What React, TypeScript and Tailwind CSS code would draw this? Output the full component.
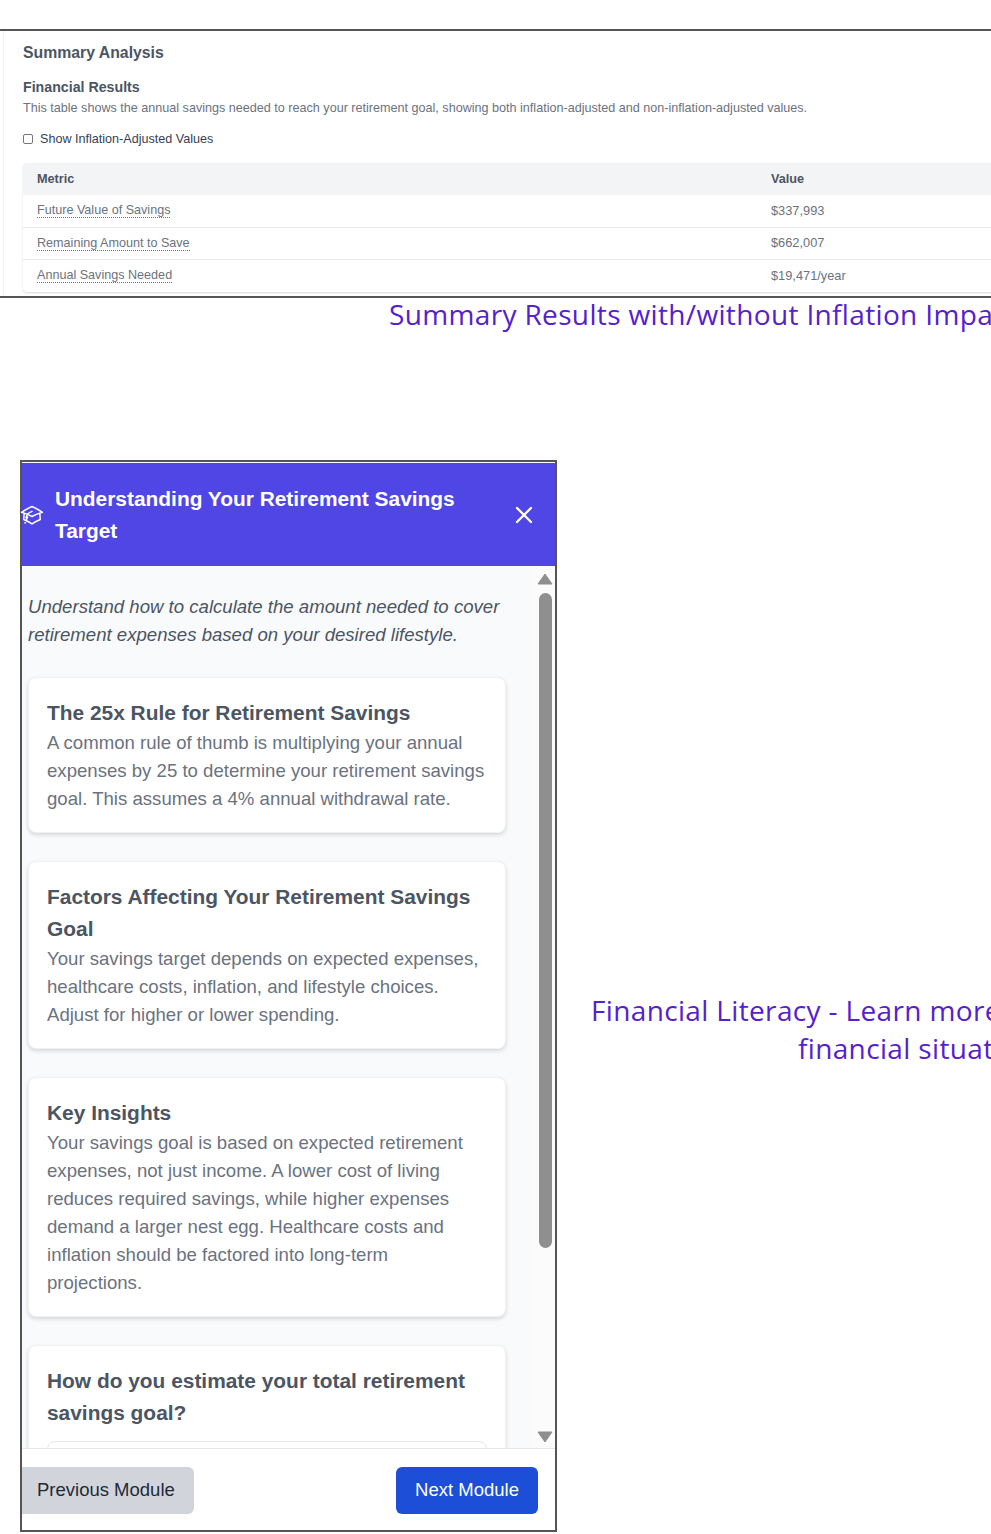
import React from "react";
import { HiOutlineAcademicCap, HiOutlineXMark } from "react-icons/hi2";

const sans = "font-['Liberation_Sans',Arial,sans-serif]";
const caption = "font-['Open_Sans',sans-serif] text-[28px] leading-[38px] tracking-[0.35px] text-[#5521d0] whitespace-nowrap";

const rows = [
  { metric: "Future Value of Savings", value: "$337,993" },
  { metric: "Remaining Amount to Save", value: "$662,007" },
  { metric: "Annual Savings Needed", value: "$19,471/year" },
];

const cards = [
  {
    title: ["The 25x Rule for Retirement Savings"],
    body: [
      "A common rule of thumb is multiplying your annual",
      "expenses by 25 to determine your retirement savings",
      "goal. This assumes a 4% annual withdrawal rate.",
    ],
  },
  {
    title: ["Factors Affecting Your Retirement Savings", "Goal"],
    body: [
      "Your savings target depends on expected expenses,",
      "healthcare costs, inflation, and lifestyle choices.",
      "Adjust for higher or lower spending.",
    ],
  },
  {
    title: ["Key Insights"],
    body: [
      "Your savings goal is based on expected retirement",
      "expenses, not just income. A lower cost of living",
      "reduces required savings, while higher expenses",
      "demand a larger nest egg. Healthcare costs and",
      "inflation should be factored into long-term",
      "projections.",
    ],
  },
];

function SummaryPanel() {
  return (
    <div className={`${sans} h-[269px] overflow-hidden border-y-2 border-[#555] pl-[3px]`}>
      <div className="h-full border-l border-[#f0f1f3] pl-[19px] pt-[11px]">
        <h2 className="text-[15.8px] leading-[22px] font-bold text-[#4b5563]">Summary Analysis</h2>
        <h3 className="mt-[14px] text-[14.2px] leading-[18px] font-bold text-[#4b5563]">Financial Results</h3>
        <p className="mt-[4px] text-[12.6px] leading-[16px] whitespace-nowrap text-[#6b7280]">
          This table shows the annual savings needed to reach your retirement goal, showing both inflation-adjusted and non-inflation-adjusted values.
        </p>
        <label className="mt-[15px] flex items-center gap-[7px] text-[12.6px] leading-[16px] text-[#374151]">
          <input type="checkbox" className="m-0 h-[10px] w-[10px] appearance-none rounded-[2px] border border-[#767676] bg-white" />
          Show Inflation-Adjusted Values
        </label>
        <div className="mt-[16px] w-[1100px] overflow-hidden rounded-[4px] shadow-[0_1px_2px_rgba(0,0,0,0.15)]">
          <table className="w-full table-fixed border-collapse text-left text-[12.7px]">
            <thead>
              <tr className="h-[32px] bg-[#f3f4f6] text-[#4b5563]">
                <th className="w-[748px] pt-[2px] pl-[14px] font-bold">Metric</th>
                <th className="pt-[2px] font-bold">Value</th>
              </tr>
            </thead>
            <tbody>
              {rows.map((row) => (
                <tr key={row.metric} className="h-[32.2px] border-b border-[#e5e7eb] text-[#6b7280] last:border-b-0">
                  <td className="pl-[14px]">
                    <span className="border-b border-dotted border-[#6366f1] text-[12.6px] text-[#6b7280]">{row.metric}</span>
                  </td>
                  <td className="pb-[1px] text-[12.8px]">{row.value}</td>
                </tr>
              ))}
            </tbody>
          </table>
        </div>
      </div>
    </div>
  );
}

function InfoCard({ title, body }: { title: string[]; body: string[] }) {
  return (
    <div className="rounded-[8px] border border-[#f0f1f3] bg-white px-[18px] pt-[19px] pb-[11px] shadow-[0_2px_4px_rgba(0,0,0,0.14)]">
      {title.map((line) => (
        <h4 key={line} className="text-[20.9px] leading-[32px] font-bold text-[#4b5563]">{line}</h4>
      ))}
      <div className="mb-[8px]">
        {body.map((line) => (
          <p key={line} className="text-[18.6px] leading-[28px] whitespace-nowrap text-[#6b7280]">{line}</p>
        ))}
      </div>
    </div>
  );
}

function Scrollbar() {
  return (
    <div className="flex w-[22px] shrink-0 flex-col items-center bg-[#fbfbfb] pt-[7px] pl-[2px]">
      <svg width="16" height="12" viewBox="0 0 16 12" className="shrink-0">
        <path d="M8 1 15 11H1Z" fill="#8f8f8f" stroke="#8f8f8f" strokeLinejoin="round" />
      </svg>
      <div className="mt-[8px] h-[655px] w-[13px] rounded-full bg-[#8f8f8f]" />
      <svg width="16" height="12" viewBox="0 0 16 12" className="mt-[183px] shrink-0">
        <path d="M8 11 15 1H1Z" fill="#8f8f8f" stroke="#8f8f8f" strokeLinejoin="round" />
      </svg>
    </div>
  );
}

function LessonModal() {
  return (
    <div className={`${sans} flex h-[1072px] w-[537px] shrink-0 flex-col border-2 border-[#555] bg-white`}>
      <div className="mt-[1px] flex h-[103px] shrink-0 items-center bg-[#4f46e5] pr-[17px] text-white">
        <HiOutlineAcademicCap className="-ml-[2px] h-[24px] w-[24px] shrink-0" />
        <h1 className="ml-[11px] flex-1 text-[20.9px] leading-[32px] font-bold">
          Understanding Your Retirement Savings<br />Target
        </h1>
        <HiOutlineXMark strokeWidth={2} className="h-[28px] w-[28px] shrink-0" />
      </div>
      <div className="flex h-[882px] shrink-0 overflow-hidden bg-[#f9fafb]">
        <div className="w-[511px] shrink-0 pt-[27px] pl-[6px]">
          <p className="text-[18.6px] leading-[28px] whitespace-nowrap text-[#4b5563] italic">
            Understand how to calculate the amount needed to cover<br />
            retirement expenses based on your desired lifestyle.
          </p>
          <div className="mt-[28px] flex w-[478px] flex-col gap-[28px]">
            {cards.map((card) => (
              <InfoCard key={card.title[0]} title={card.title} body={card.body} />
            ))}
            <div className="rounded-[8px] border border-[#f0f1f3] bg-white px-[18px] pt-[19px] shadow-[0_2px_4px_rgba(0,0,0,0.14)]">
              <h4 className="text-[20.9px] leading-[32px] font-bold text-[#4b5563]">How do you estimate your total retirement</h4>
              <h4 className="text-[20.9px] leading-[32px] font-bold text-[#4b5563]">savings goal?</h4>
              <div className="mt-[12px] h-[60px] rounded-[8px] border border-[#e5e7eb] bg-white" />
            </div>
          </div>
        </div>
        <Scrollbar />
      </div>
      <div className="flex flex-1 items-center justify-between border-t border-[#e5e7eb] bg-white pt-[2px] pr-[17px]">
        <button className="h-[47px] w-[172px] rounded-r-[6px] bg-[#d1d5db] pb-[2px] pl-[15px] text-left text-[18.5px] text-[#1f2937]">Previous Module</button>
        <button className="h-[47px] w-[142px] rounded-[6px] bg-[#1d4ed8] pb-[2px] text-center text-[18.5px] text-white">Next Module</button>
      </div>
    </div>
  );
}

export default function App() {
  return (
    <div className="h-[1534px] w-[991px] overflow-hidden bg-white pt-[29px]">
      <SummaryPanel />
      <p className={`${caption} pl-[389px] mt-[-3px]`}>Summary Results with/without Inflation Impact</p>
      <div className="mt-[127px] flex items-center pl-[20px]">
        <LessonModal />
        <div className={`${caption} ml-[34px] mt-[66px]`}>
          <p>Financial Literacy - Learn more about your</p>
          <p className="pl-[207px]">financial situation</p>
        </div>
      </div>
    </div>
  );
}
